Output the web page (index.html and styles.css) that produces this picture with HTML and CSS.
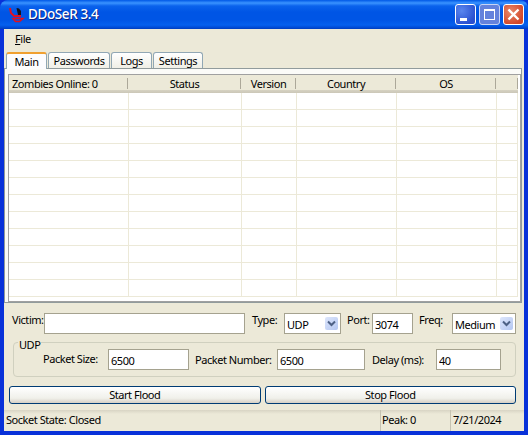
FILE: index.html
```html
<!doctype html>
<html>
  <head>
    <meta charset="utf-8">
    <title>DDoSeR 3.4</title>
    <link rel="stylesheet" href="styles.css">
  </head>
  <body>
    <div class="window">
      <div class="titlebar">
        <svg class="appicon" width="16" height="16" viewBox="0 0 16 16">
          <path d="M1 1 L2 6 L5 9 L12 9" fill="none" stroke="#e01020" stroke-width="2"/>
          <path d="M4 11.5 L14 11.5 L10.5 14.5 L6.5 14.5 Z" fill="none" stroke="#e01020" stroke-width="1.6"/>
          <path d="M7.5 1 L10 1.5 L12 4 L12 8 L9 8 Z" fill="#14141c"/>
        </svg>
        <span class="title">DDoSeR 3.4</span>
        <div class="caption">
          <div class="capbtn"><span class="min"></span></div>
          <div class="capbtn disabled"><span class="max"></span></div>
          <div class="capbtn close">
            <svg width="21" height="21" viewBox="0 0 21 21"><path d="M5.5 5.5 L15.5 15.5 M15.5 5.5 L5.5 15.5" stroke="#fff" stroke-width="2.4"/></svg>
          </div>
        </div>
      </div>
      <div class="client">
        <div class="menubar"><span class="menu"><u>F</u>ile</span></div>
        <div class="tabs">
          <div class="tab active">Main</div>
          <div class="tab">Passwords</div>
          <div class="tab">Logs</div>
          <div class="tab">Settings</div>
        </div>
        <div class="panel">
          <div class="list">
            <table>
              <colgroup>
                <col class="c1"><col class="c2"><col class="c3"><col class="c4"><col class="c5"><col>
              </colgroup>
              <thead>
                <tr>
                  <th class="left">Zombies Online: 0</th><th>Status</th><th>Version</th><th>Country</th><th>OS</th><th></th>
                </tr>
              </thead>
              <tbody>
                <tr><td></td><td></td><td></td><td></td><td></td><td></td></tr>
                <tr><td></td><td></td><td></td><td></td><td></td><td></td></tr>
                <tr><td></td><td></td><td></td><td></td><td></td><td></td></tr>
                <tr><td></td><td></td><td></td><td></td><td></td><td></td></tr>
                <tr><td></td><td></td><td></td><td></td><td></td><td></td></tr>
                <tr><td></td><td></td><td></td><td></td><td></td><td></td></tr>
                <tr><td></td><td></td><td></td><td></td><td></td><td></td></tr>
                <tr><td></td><td></td><td></td><td></td><td></td><td></td></tr>
                <tr><td></td><td></td><td></td><td></td><td></td><td></td></tr>
                <tr><td></td><td></td><td></td><td></td><td></td><td></td></tr>
                <tr><td></td><td></td><td></td><td></td><td></td><td></td></tr>
                <tr><td></td><td></td><td></td><td></td><td></td><td></td></tr>
              </tbody>
            </table>
          </div>
        </div>
        <div class="target">
          <label class="lbl victim-l">Victim:</label>
          <input class="field victim" type="text" value="">
          <label class="lbl type-l">Type:</label>
          <div class="combo type"><span>UDP</span><i class="arrow"><svg width="9" height="7" viewBox="0 0 9 7"><path d="M1 1.5 L4.5 5 L8 1.5" fill="none" stroke="#4d6185" stroke-width="2"/></svg></i></div>
          <label class="lbl port-l">Port:</label>
          <input class="field port" type="text" value="3074">
          <label class="lbl freq-l">Freq:</label>
          <div class="combo freq"><span>Medium</span><i class="arrow"><svg width="9" height="7" viewBox="0 0 9 7"><path d="M1 1.5 L4.5 5 L8 1.5" fill="none" stroke="#4d6185" stroke-width="2"/></svg></i></div>
        </div>
        <div class="group">
          <span class="legend">UDP</span>
          <label class="lbl size-l">Packet Size:</label>
          <input class="field size" type="text" value="6500">
          <label class="lbl number-l">Packet Number:</label>
          <input class="field number" type="text" value="6500">
          <label class="lbl delay-l">Delay (ms):</label>
          <input class="field delay" type="text" value="40">
        </div>
        <div class="actions">
          <button class="btn">Start Flood</button>
          <button class="btn">Stop Flood</button>
        </div>
        <div class="statusbar">
          <div class="st st1">Socket State: Closed</div>
          <div class="st st2">Peak: 0</div>
          <div class="st st3">7/21/2024</div>
        </div>
      </div>
    </div>
  </body>
</html>
```

FILE: styles.css
```css
html, body {
  margin: 0;
  height: 100%;
  background-color: #0831d9;
}
body {
  font-family: "Noto Sans", "DejaVu Sans", sans-serif;
  font-size: 11px;
  letter-spacing: -0.45px;
  color: #000;
  overflow: hidden;
}

.window {
  width: 528px;
  height: 435px;
  display: flex;
  flex-direction: column;
  border-radius: 8px 8px 0 0;
  background-color: #0831d9;
  overflow: hidden;
}

/* title bar */
.titlebar {
  height: 29px;
  flex: none;
  display: flex;
  align-items: center;
  padding: 0 4px 0 9px;
  box-sizing: border-box;
  background: linear-gradient(to bottom, #0058e6 0, #3a93ff 3px, #0a62ec 6px, #0055e5 12px, #0055e5 20px, #0560ee 25px, #0047d0 28px, #003dba 29px);
}
.appicon {
  flex: none;
  margin-right: 3px;
}
.title {
  font-weight: 500;
  font-size: 13.5px;
  letter-spacing: -0.4px;
  line-height: 14px;
  margin-top: -2px;
  color: #fff;
  text-shadow: 1px 1px 0 #0f1f80;
  flex: 1;
}
.caption {
  display: flex;
  gap: 3px;
}
.capbtn {
  width: 21px;
  height: 21px;
  box-sizing: border-box;
  border: 1px solid #fff;
  border-radius: 3px;
  background: radial-gradient(circle at 30% 30%, #5a86ee, #2a50d0 75%);
  position: relative;
}
.capbtn.disabled {
  background: #6482dc;
  border-color: #c8d4f4;
}
.capbtn.close {
  background: radial-gradient(circle at 35% 35%, #e8886a, #d2472a 75%);
}
.capbtn svg {
  display: block;
  margin: -1px;
}
.min {
  position: absolute;
  left: 4px;
  bottom: 3px;
  width: 7px;
  height: 3px;
  background-color: #fff;
}
.max {
  position: absolute;
  left: 4px;
  top: 4px;
  width: 9px;
  height: 8px;
  border: 1px solid #fff;
  border-top-width: 2px;
}

/* client area */
.client {
  flex: none;
  width: 520px;
  height: 402px;
  margin-left: 4px;
  background-color: #ece9d8;
  display: flex;
  flex-direction: column;
}
.menubar {
  height: 20px;
  flex: none;
  box-sizing: border-box;
  display: flex;
  align-items: center;
  padding: 0 0 2px 11px;
}

/* tabs */
.tabs {
  flex: none;
  display: flex;
  height: 16px;
  margin-top: 3px;
  padding-left: 2px;
  gap: 1px;
  position: relative;
  z-index: 1;
}
.tab {
  height: 16px;
  box-sizing: border-box;
  border: 1px solid #91a7b4;
  border-bottom: 0;
  border-radius: 3px 3px 0 0;
  background: linear-gradient(to bottom, #fff, #f0efe6);
  text-align: center;
  line-height: 15px;
  width: 42px;
}
.tab:nth-child(2) { width: 62px; }
.tab:nth-child(3) { width: 41px; }
.tab:nth-child(4) { width: 50px; }
.tab.active {
  width: 41px;
  height: 17px;
  border-top: 2px solid #f0a030;
  background: #fcfcfe;
  line-height: 15px;
}
.panel {
  flex: none;
  width: 518px;
  height: 235px;
  box-sizing: border-box;
  border: 1px solid #919b9c;
  background-color: #fbfbf8;
  padding: 5px 0 0 3px;
}
.list {
  width: 513px;
  height: 228px;
  box-sizing: border-box;
  border: 1px solid #a0a0a0;
  background-color: #fff;
  overflow: hidden;
}
table {
  border-collapse: collapse;
  table-layout: fixed;
  width: 509px;
}
.c1 { width: 119px; }
.c2 { width: 113px; }
.c3 { width: 55px; }
.c4 { width: 100px; }
.c5 { width: 100px; }
th {
  height: 16px;
  padding: 0 0 2px;
  font-weight: normal;
  background: linear-gradient(to bottom, #ece9d8 0, #ece9d8 15px, #d6d2c2 15px, #cbc7b8 18px);
  position: relative;
}
th::after {
  content: "";
  position: absolute;
  right: 0;
  top: 3px;
  height: 11px;
  width: 1px;
  background-color: #aca899;
}
th.left {
  text-align: left;
  padding-left: 3px;
}
td {
  height: 16px;
  padding: 0;
  border-right: 1px solid #ece9d8;
  border-bottom: 1px solid #ece9d8;
}

/* form rows */
.lbl {
  white-space: nowrap;
}
.field {
  box-sizing: border-box;
  height: 21px;
  border: 1px solid #a5a28f;
  background-color: #fff;
  font: inherit;
  letter-spacing: inherit;
  padding: 1px 2px 0;
  margin: 0;
  border-radius: 0;
  outline: none;
}
.target {
  flex: none;
  display: flex;
  align-items: flex-start;
  height: 30px;
  box-sizing: border-box;
  padding: 10px 0 0 8px;
}
.target .lbl {
  line-height: 14px;
}
.victim-l { width: 32px; }
.victim { width: 201px; }
.type-l { margin-left: 7px; width: 32px; }
.port-l { margin-left: 6px; width: 25px; }
.port { width: 41px; }
.freq-l { margin-left: 6px; width: 33px; }
.combo {
  box-sizing: border-box;
  height: 21px;
  border: 1px solid #a5a28f;
  background-color: #fff;
  display: flex;
  align-items: center;
  justify-content: space-between;
  padding: 1px 2px 0 2px;
}
.type { width: 57px; }
.freq { width: 64px; }
.arrow {
  width: 13px;
  height: 13px;
  margin-top: -1px;
  border-radius: 2px;
  background: linear-gradient(135deg, #dde6fb, #b4c7f2);
  display: flex;
  align-items: center;
  justify-content: center;
}
.group {
  flex: none;
  width: 503px;
  height: 35px;
  box-sizing: border-box;
  margin: 9px 0 0 9px;
  padding: 0 0 0 29px;
  border: 1px solid #d0d0bf;
  border-radius: 4px;
  display: flex;
  align-items: center;
  position: relative;
}
.legend {
  position: absolute;
  top: -5px;
  left: 4px;
  padding: 0 1px;
  line-height: 13px;
  background-color: #ece9d8;
}
.size-l { width: 65px; margin-top: -3px; }
.size { width: 81px; margin-right: 6px; }
.number-l { width: 82px; }
.number { width: 88px; margin-right: 7px; }
.delay-l { width: 64px; }
.delay { width: 65px; }

/* buttons */
.actions {
  flex: none;
  display: flex;
  gap: 4px;
  margin: 9px 0 0 5px;
  width: 507px;
}
.btn {
  flex: 1;
  height: 18px;
  padding: 0 0 2px;
  font: inherit;
  letter-spacing: inherit;
  color: #000;
  border: 1px solid #003c74;
  border-radius: 3px;
  background: linear-gradient(to bottom, #fff, #f0f0ea 70%, #d6d0c5);
}

/* status bar */
.statusbar {
  flex: none;
  height: 21px;
  margin-top: 6px;
  display: flex;
  align-items: center;
  background: linear-gradient(to bottom, #d8d4c4 0, #ece9d8 4px);
}
.st {
  box-sizing: border-box;
  height: 21px;
  line-height: 19px;
  padding-left: 2px;
}
.st1 { width: 376px; }
.st2 { width: 70px; border-left: 1px solid #c6c3b2; padding-left: 1px; }
.st3 { width: 74px; border-left: 1px solid #c6c3b2; padding-left: 2px; }
```
